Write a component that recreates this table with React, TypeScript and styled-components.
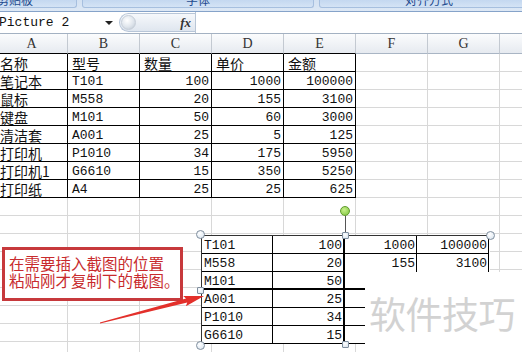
import React from 'react';
import styled, { createGlobalStyle } from 'styled-components';

const GlobalStyle = createGlobalStyle`
  html, body { margin: 0; padding: 0; background: #fff; }
  body { width: 522px; height: 352px; overflow: hidden; }
`;

const MONO = `"Liberation Mono", "Noto Sans CJK SC", monospace`;
const CJK = `"Noto Sans CJK SC", "Liberation Sans", sans-serif`;

// Types
type Value = string | number;

const Page = styled.div`
  position: relative;
  width: 522px;
  height: 352px;
  overflow: hidden;
  display: flex;
  flex-direction: column;
`;

// Ribbon remains at the very top
const TopStrip = styled.div`
  height: 11px;
  flex: none;
  display: flex;
  gap: 5px;
  margin-left: -47px;
  background: linear-gradient(#d3e1f2, #dde8f5);
  border-bottom: 1px solid #86a3c9;
  overflow: hidden;
`;

const RibbonTab = styled.div<{ $w: number }>`
  width: ${p => p.$w}px;
  height: 8px;
  flex: none;
  box-sizing: border-box;
  border: 1px solid #a6bfdf;
  border-top: none;
  border-radius: 0 0 3px 3px;
  background: linear-gradient(#c4d8f0, #d4e3f5);
  display: flex;
  justify-content: center;
  overflow: hidden;
`;

const RibbonLabel = styled.span`
  margin-top: -6px;
  font: 12px/12px ${CJK};
  color: #1f4b8e;
  white-space: nowrap;
`;

// Formula bar
const FormulaBar = styled.div`
  height: 21px;
  flex: none;
  display: flex;
  background: #fff;
  border-bottom: 1px solid #a3b1c2;
`;

const NameBox = styled.div`
  width: 120px;
  flex: none;
  display: flex;
  align-items: center;
  justify-content: space-between;
  padding-right: 4px;
  margin-left: -1px;
  box-sizing: border-box;
  font: 13px ${MONO};
  color: #111;
`;

const DropArrow = styled.span`
  width: 0;
  height: 0;
  border-left: 4px solid transparent;
  border-right: 4px solid transparent;
  border-top: 4px solid #222;
  margin-right: 2px;
`;

const FxPill = styled.div`
  width: 76px;
  flex: none;
  margin: 1px 0;
  display: flex;
  align-items: center;
  justify-content: space-between;
  padding: 0 4px 0 1px;
  box-sizing: border-box;
  border-radius: 10px 0 0 10px;
  border: 1px solid #b8c6d8;
  border-right: none;
  background: linear-gradient(#f6f8fb, #dfe6ef);
`;

const Knob = styled.span`
  width: 15px;
  height: 15px;
  border-radius: 50%;
  background: radial-gradient(circle at 40% 35%, #ffffff 0%, #dfe5ec 55%, #b9c3cf 100%);
  border: 1px solid #c6ced8;
  box-sizing: border-box;
`;

const Fx = styled.span`
  font: italic bold 13px "Liberation Serif", serif;
  color: #333;
`;

const FormulaInput = styled.div`
  flex: 1;
  border-left: 1px solid #b9c6d6;
  background: #fff;
`;

// Sheet grid
const Sheet = styled.div`
  flex: 1;
  margin-left: -4px;
  display: flex;
  flex-direction: column;
`;

const Row = styled.div`
  display: flex;
  flex: none;
`;

const HeadCell = styled.div<{ $dark?: boolean }>`
  width: 72px;
  height: 20px;
  flex: none;
  box-sizing: border-box;
  border-right: 1px solid #c3c9d1;
  border-bottom: 1px solid ${p => (p.$dark ? '#000' : '#a9b5c4')};
  background: linear-gradient(#fbfcfd, #e6eaf0);
  display: flex;
  align-items: center;
  justify-content: center;
  font: 14px "Liberation Serif", serif;
  color: #333;
`;

const Cell = styled.div<{ $boxed?: boolean; $right?: boolean; $cjk?: boolean }>`
  width: 72px;
  height: 18px;
  flex: none;
  box-sizing: border-box;
  border-right: 1px solid ${p => (p.$boxed ? '#000' : '#d8d8d8')};
  border-bottom: 1px solid ${p => (p.$boxed ? '#000' : '#d8d8d8')};
  padding: ${p => (p.$cjk ? '1px' : '2px')} 2px 0 4px;
  font-family: ${p => (p.$cjk ? CJK : MONO)};
  font-size: ${p => (p.$cjk ? '14px' : '13px')};
  line-height: 16px;
  text-align: ${p => (p.$right ? 'right' : 'left')};
  color: #111;
  white-space: nowrap;
  overflow: hidden;
`;

// Pasted picture object
const Picture = styled.div`
  position: absolute;
  left: 201px;
  top: 235px;
  width: 289px;
  height: 109px;
  box-sizing: border-box;
  border-top: 1px solid #333;
  border-left: 1px solid #333;
  background: #fff;
  display: flex;
  flex-direction: column;
`;

const PicCell = styled.div<{ $w: number; $right?: boolean; $thick?: boolean; $noBottom?: boolean; $thickBottom?: boolean }>`
  width: ${p => p.$w}px;
  height: 18px;
  flex: none;
  box-sizing: border-box;
  border-right: ${p => (p.$thick ? '2px' : '1px')} solid #000;
  border-bottom: ${p => (p.$noBottom ? '0' : p.$thickBottom ? '2px' : '1px')} solid #000;
  padding: 2px 1px 0 2px;
  font: 13px/16px ${MONO};
  text-align: ${p => (p.$right ? 'right' : 'left')};
  color: #111;
  white-space: nowrap;
  overflow: hidden;
`;

const Cover = styled.div`
  position: absolute;
  left: 365px;
  top: 272px;
  right: 0;
  bottom: 0;
  background: #fff;
  display: flex;
  align-items: center;
  padding-left: 4px;
  padding-top: 2px;
`;

const Watermark = styled.span`
  font: 37px ${CJK};
  color: #d2d2d2;
  letter-spacing: -0.5px;
  white-space: nowrap;
`;

const Handle = styled.div<{ $square?: boolean }>`
  position: absolute;
  width: ${p => (p.$square ? 7 : 9)}px;
  height: ${p => (p.$square ? 7 : 9)}px;
  margin: ${p => (p.$square ? -3.5 : -4.5)}px 0 0 ${p => (p.$square ? -3.5 : -4.5)}px;
  box-sizing: border-box;
  border: 1px solid #7f8e9e;
  border-radius: ${p => (p.$square ? '1px' : '50%')};
  background: radial-gradient(circle at 40% 35%, #ffffff, #d6e2ee);
`;

const RotateHandle = styled.div`
  position: absolute;
  left: 340px;
  top: 206px;
  width: 10px;
  height: 10px;
  box-sizing: border-box;
  border-radius: 50%;
  border: 1px solid #5f9b2c;
  background: radial-gradient(circle at 40% 35%, #c8f08c, #7cc23a);
`;

const RotateStem = styled.div`
  position: absolute;
  left: 345px;
  top: 216px;
  width: 1px;
  height: 16px;
  background: #555;
`;

const Callout = styled.div`
  position: absolute;
  left: 2px;
  top: 247px;
  width: 181px;
  height: 54px;
  box-sizing: border-box;
  border: 3px solid #c7393c;
  background: #fff;
  padding: 5px 0 0 4px;
  font: 15.5px/17px ${CJK};
  color: #c82b2d;
  white-space: nowrap;
`;

const ArrowSvg = styled.svg`
  position: absolute;
  left: 0;
  top: 0;
  pointer-events: none;
`;

const COL_LETTERS = ['A', 'B', 'C', 'D', 'E', 'F', 'G', 'H'];

const tableRows: Value[][] = [
  ['名称', '型号', '数量', '单价', '金额'],
  ['笔记本', 'T101', 100, 1000, 100000],
  ['鼠标', 'M558', 20, 155, 3100],
  ['键盘', 'M101', 50, 60, 3000],
  ['清洁套', 'A001', 25, 5, 125],
  ['打印机', 'P1010', 34, 175, 5950],
  ['打印机1', 'G6610', 15, 350, 5250],
  ['打印纸', 'A4', 25, 25, 625],
];

// the pasted screenshot: rows 3+ lose their D/E values under the white patch
const pictureRows: Value[][] = tableRows
  .slice(1, 7)
  .map((r, ri) => r.slice(1).map((v, ci) => (ri >= 2 && ci >= 2 ? '' : v)));
const picWidths = [71, 72, 72, 72];

const EMPTY_ROWS = 9;

function hasCjk(v: Value) {
  return typeof v === 'string' && /[\u4e00-\u9fff]/.test(v);
}

function App() {
  return (
    <Page>
      <GlobalStyle />
      <TopStrip>
        <RibbonTab $w={124}><RibbonLabel>剪贴板</RibbonLabel></RibbonTab>
        <RibbonTab $w={232}><RibbonLabel>字体</RibbonLabel></RibbonTab>
        <RibbonTab $w={220}><RibbonLabel>对齐方式</RibbonLabel></RibbonTab>
      </TopStrip>

      <FormulaBar>
        <NameBox>
          Picture 2
          <DropArrow />
        </NameBox>
        <FxPill>
          <Knob />
          <Fx>fx</Fx>
        </FxPill>
        <FormulaInput />
      </FormulaBar>

      <Sheet>
        <Row>
          {COL_LETTERS.map((c, i) => (
            <HeadCell key={c} $dark={i < 5}>{c}</HeadCell>
          ))}
        </Row>
        {tableRows.map((r, ri) => (
          <Row key={ri}>
            {COL_LETTERS.map((c, ci) => {
              const v = ci < 5 ? r[ci] : '';
              return (
                <Cell
                  key={c}
                  $boxed={ci < 5}
                  $right={typeof v === 'number'}
                  $cjk={hasCjk(v)}
                >
                  {v}
                </Cell>
              );
            })}
          </Row>
        ))}
        {Array.from({ length: EMPTY_ROWS }).map((_, ri) => (
          <Row key={'e' + ri}>
            {COL_LETTERS.map(c => (
              <Cell key={c} />
            ))}
          </Row>
        ))}
      </Sheet>

      <Picture>
        {pictureRows.map((r, ri) => (
          <Row key={ri}>
            {r.map((v, ci) => (
              <PicCell
                key={ci}
                $w={picWidths[ci]}
                $right={typeof v === 'number'}
                $thick={ci === 1}
                $noBottom={ri === 1 && ci > 1}
                $thickBottom={ri === 2}
              >
                {v}
              </PicCell>
            ))}
          </Row>
        ))}
      </Picture>

      <Cover>
        <Watermark>软件技巧</Watermark>
      </Cover>

      <RotateStem />
      <RotateHandle />
      <Handle style={{ left: 200, top: 234 }} />
      <Handle $square style={{ left: 345, top: 235 }} />
      <Handle style={{ left: 490, top: 235 }} />
      <Handle $square style={{ left: 200, top: 290 }} />
      <Handle style={{ left: 200, top: 345 }} />
      <Handle $square style={{ left: 345, top: 344 }} />

      <Callout>
        在需要插入截图的位置
        <br />
        粘贴刚才复制下的截图。
      </Callout>

      <ArrowSvg width="522" height="352" viewBox="0 0 522 352">
        <polygon
          points="100.1,323.5 187.2,302.4 185.9,306.2 204,296 183.2,296.0 186.0,298.6 99.9,322.5"
          fill="#e3302b"
        />
      </ArrowSvg>
    </Page>
  );
}

export default App;
